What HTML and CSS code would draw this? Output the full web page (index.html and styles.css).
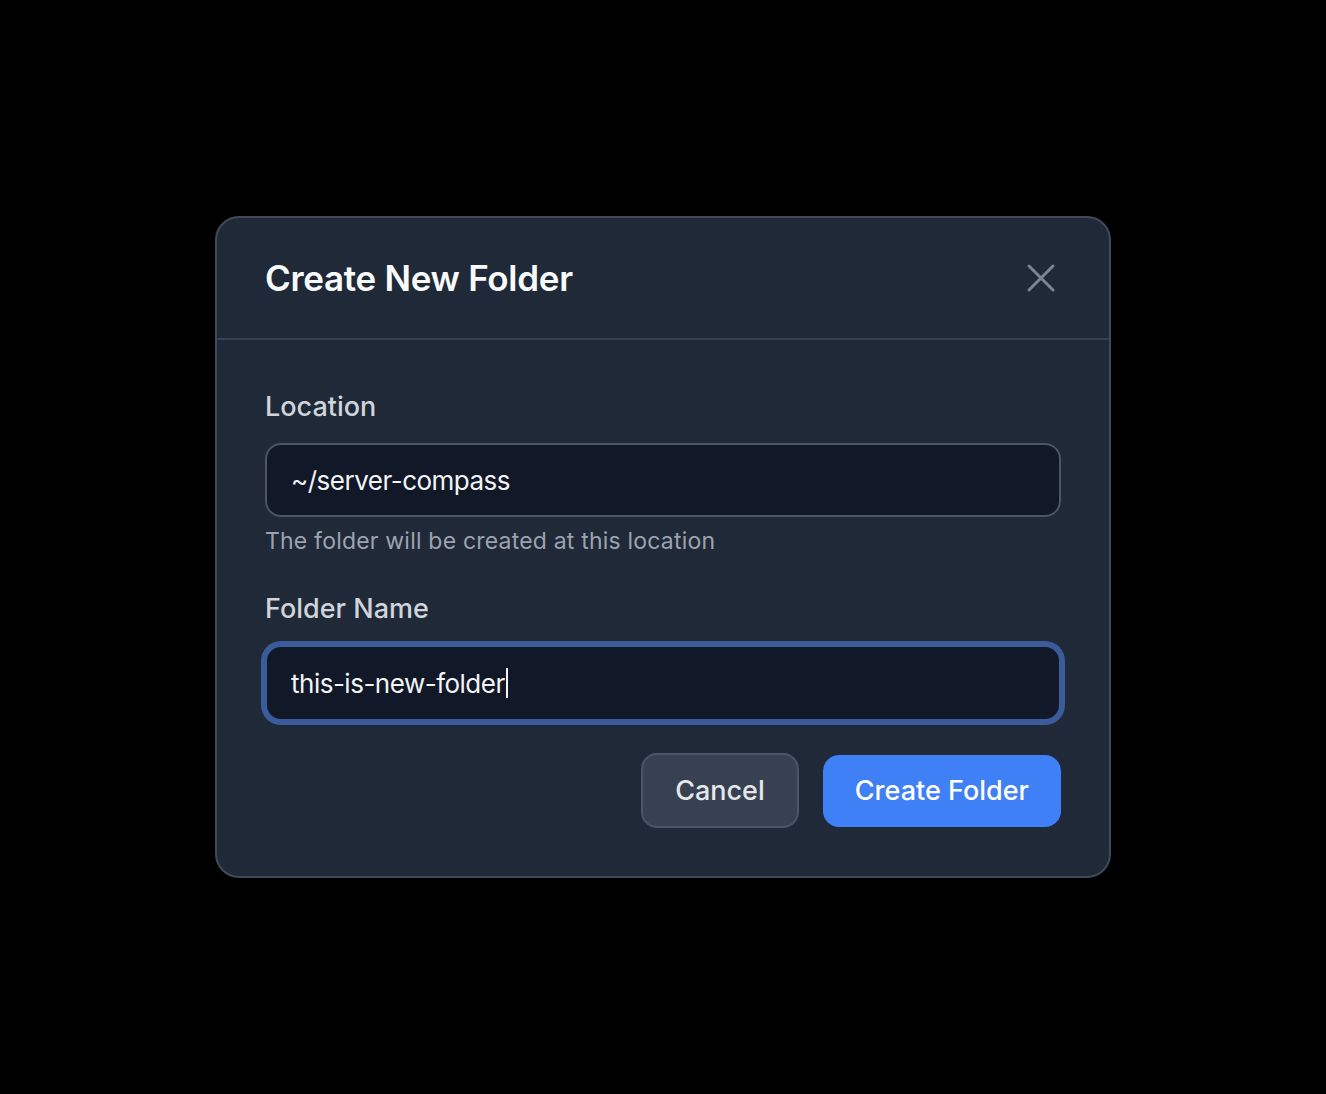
FILE: index.html
```html
<!DOCTYPE html>
<html lang="en">
<head>
<meta charset="utf-8">
<title>Create New Folder</title>
<link rel="stylesheet" href="styles.css">
</head>
<body>
<div class="overlay">
  <div class="dialog">
    <div class="dialog-header">
      <h2 class="dialog-title">Create New Folder</h2>
      <button class="close-btn" aria-label="Close">
        <svg viewBox="0 0 24 24" width="48" height="48" fill="none" stroke="currentColor" stroke-width="1.5" stroke-linecap="round"><path d="M6 18L18 6M6 6l12 12"/></svg>
      </button>
    </div>
    <div class="dialog-body">
      <div class="field">
        <label class="field-label">Location</label>
        <div class="input">~/server-compass</div>
        <p class="field-help">The folder will be created at this location</p>
      </div>
      <div class="field">
        <label class="field-label">Folder Name</label>
        <div class="input input-focus">this-is-new-folder<span class="caret"></span></div>
      </div>
      <div class="actions">
        <button class="btn btn-secondary">Cancel</button>
        <button class="btn btn-primary">Create Folder</button>
      </div>
    </div>
  </div>
</div>
</body>
</html>
```
FILE: styles.css
```css
html, body {
  margin: 0;
  padding: 0;
  background: #000;
  height: 100%;
}
body {
  font-family: Inter, "Noto Sans", "Liberation Sans", sans-serif;
}
.overlay {
  display: flex;
  align-items: center;
  justify-content: center;
  height: 1094px;
}
.dialog {
  width: 896px;
  box-sizing: border-box;
  background: #1f2937;
  border: 2px solid #414a58;
  border-radius: 24px;
}
.dialog-header {
  display: flex;
  align-items: center;
  justify-content: space-between;
  height: 120px;
  padding: 0 44px 0 48px;
  border-bottom: 2px solid #374151;
}
.dialog-title {
  margin: 0;
  font-size: 35px;
  line-height: 56px;
  font-weight: 600;
  color: #f9fafb;
  letter-spacing: -0.3px;
}
.close-btn {
  background: none;
  border: none;
  padding: 0;
  width: 48px;
  height: 48px;
  color: #7c8492;
  display: flex;
  cursor: pointer;
}
.dialog-body {
  padding: 47px 48px 48px;
}
.field {
  margin-bottom: 32px;
}
.field-label {
  display: block;
  font-size: 27px;
  line-height: 40px;
  font-weight: 500;
  color: #d1d5db;
  margin-bottom: 16px;
}
.input {
  box-sizing: border-box;
  height: 74px;
  display: flex;
  align-items: center;
  padding: 0 24px;
  background: #111827;
  border: 2px solid #4b5563;
  border-radius: 16px;
  font-size: 26px;
  letter-spacing: -0.5px;
  color: #f3f4f6;
}
.input-focus {
  height: 76px;
  border-color: #3b5b9a;
  box-shadow: 0 0 0 4px #3b5b9a;
}
.caret {
  display: inline-block;
  width: 2px;
  height: 30px;
  background: #f3f4f6;
  margin-left: 1px;
}
.field-help {
  margin: 8px 0 0;
  font-size: 23px;
  line-height: 32px;
  letter-spacing: 0.2px;
  color: #9ca3af;
}
.actions {
  display: flex;
  justify-content: flex-end;
  align-items: center;
  gap: 24px;
  margin-top: 32px;
}
.btn {
  font-family: inherit;
  font-size: 27px;
  font-weight: 500;
  border-radius: 16px;
  padding: 0 32px;
  cursor: pointer;
}
.btn-secondary {
  height: 75px;
  background: #374151;
  border: 2px solid #4b5563;
  color: #e5e7eb;
}
.btn-primary {
  height: 72px;
  background: #3f80f6;
  border: none;
  color: #ffffff;
}
```
